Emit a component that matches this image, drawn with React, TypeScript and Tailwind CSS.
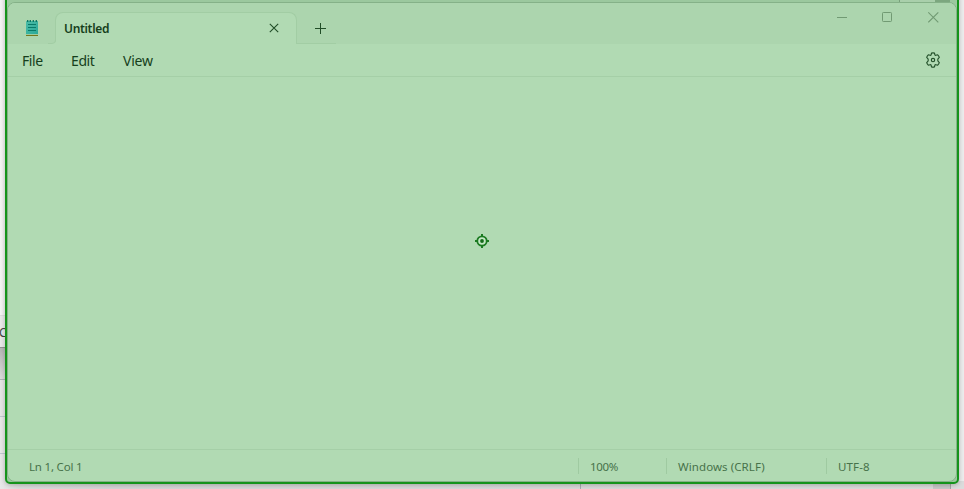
import React from "react";

function NotepadIcon() {
  return (
    <svg width="14" height="18" viewBox="0 0 14 18" className="block">
      <defs>
        <linearGradient id="paper" x1="0" y1="0" x2="1" y2="1">
          <stop offset="0" stopColor="#4dbda8" />
          <stop offset="1" stopColor="#2aa898" />
        </linearGradient>
      </defs>
      <rect x="1" y="2" width="12" height="13" rx="0.6" fill="url(#paper)" />
      <path d="M2.7 1v2M5.3 1v2M8.3 1v2M11.3 1v2" stroke="#08735f" strokeWidth="1.3" />
      <path d="M3 5.5h8M3 8.5h8M3 11.5h8" stroke="#087a68" strokeWidth="1" />
      <path d="M1 15.5h12" stroke="#9dcda0" strokeWidth="1" />
      <path d="M1 16.5h12" stroke="#73761b" strokeWidth="1" />
    </svg>
  );
}

function GearIcon() {
  return (
    <svg width="16" height="16" viewBox="0 0 16 16" fill="none" stroke="#23502a" strokeWidth="1.15" strokeLinejoin="round" className="block">
      <path d="M6.5 1.1Q8 .7 9.5 1.1L9.9 2.9Q10.2 3.4 10.9 3.3L12.7 2.8Q13.8 3.9 14.3 5.4L13 6.8Q12.5 8 13 9.2L14.3 10.6Q13.8 12.1 12.7 13.2L10.9 12.7Q10.2 12.6 9.9 13.1L9.5 14.9Q8 15.3 6.5 14.9L6.1 13.1Q5.8 12.6 5.1 12.7L3.3 13.2Q2.2 12.1 1.7 10.6L3 9.2Q3.5 8 3 6.8L1.7 5.4Q2.2 3.9 3.3 2.8L5.1 3.3Q5.8 3.4 6.1 2.9Z" />
      <circle cx="8" cy="8" r="1.7" />
    </svg>
  );
}

function TargetIcon() {
  return (
    <svg width="14" height="14" viewBox="0 0 14 14" className="block">
      <circle cx="7" cy="7" r="4.7" fill="#c4e8c5" stroke="#1a7a20" strokeWidth="1.8" />
      <circle cx="7" cy="7" r="1.9" fill="#156b1a" />
      <path d="M7 0v2.5M7 11.5V14M0 7h2.5M11.5 7H14" stroke="#1a7a20" strokeWidth="2" />
    </svg>
  );
}

function Backdrop() {
  return (
    <div className="flex h-full w-full bg-[#ededed]">
      <div className="flex w-5 flex-col overflow-hidden">
        <div className="h-[316px] border-b border-[#dedede] bg-linear-to-r from-[#f5f5f5] to-[#e5e5e5]" />
        <div className="h-[32px] border-b border-[#929292] bg-[#e9e9e9] pt-[9px] text-[12px] leading-4 text-[#444]">
          <span className="-ml-px">C</span>
        </div>
        <div className="h-8 border-b border-[#b0b1b8] bg-linear-to-b from-[#b6b6b6] to-[#dcdcdc]" />
        <div className="h-[37px] border-b border-[#c1c8d0] bg-[#e6e6e6]" />
        <div className="h-[37px] border-b border-[#c1c8d0] bg-[#e8e8e8]" />
        <div className="grow bg-linear-to-r from-[#e8e8e8] to-[#dcdcdc]" />
      </div>
      <div className="flex grow flex-col justify-end">
        <div className="flex h-2 bg-linear-to-r from-[#dcdcdc] via-[#d6d4d6] via-10% to-[#dcdcdc]">
          <div className="w-[561px] border-r border-[#a8a9b0]" />
          <div className="grow" />
          <div className="mr-[13px] h-full w-[18px] border-r border-[#a5a5a5] bg-[#c8c8c8]" />
        </div>
      </div>
    </div>
  );
}

function TitleBar() {
  return (
    <div className="flex h-[41px] shrink-0 bg-[#acd5ae]">
      <div className="flex w-[47px] justify-center pt-[16px] pl-[1px]">
        <NotepadIcon />
      </div>
      <div className="relative mt-[9px] flex h-8 w-[242px] items-start justify-between rounded-t-[8px] border border-b-0 border-[#a2cda4] bg-[#b1dab3] pl-2">
        <svg width="8" height="8" viewBox="0 0 8 8" className="absolute bottom-0 -left-[8px]">
          <path d="M8 4Q8 7.5 4 7.5H0V8H8Z" fill="#b1dab3" />
          <path d="M7.5 0V4Q7.5 7.5 4 7.5H0" fill="none" stroke="#a2cda4" />
        </svg>
        <span className="mt-2 text-[12px] leading-4 font-semibold tracking-[-0.32px] text-[#163f1c]">Untitled</span>
        <svg width="10" height="10" viewBox="0 0 10 10" className="mt-[10px] mr-[17px]">
          <path d="M.8.8l8.4 8.4M9.2.8L.8 9.2" stroke="#214d27" strokeWidth="1.1" />
        </svg>
      </div>
      <div className="flex h-[41px] w-[39px] border-b border-[#a2cda4] pt-[20px] pl-[18px]">
        <svg width="11" height="11" viewBox="0 0 11 11">
          <path d="M0 5.5h11M5.5 0v11" stroke="#214d27" />
        </svg>
      </div>
      <div className="ml-auto flex gap-[35px] pt-[8px] pr-[17px]">
        <svg width="11" height="12" viewBox="0 0 11 12">
          <path d="M1 6.5h10" stroke="#719a73" />
        </svg>
        <svg width="11" height="12" viewBox="0 0 11 12">
          <rect x="0.5" y="1.5" width="9" height="9" rx="0.8" fill="none" stroke="#719a73" />
        </svg>
        <svg width="11" height="12" viewBox="0 0 11 12">
          <path d="M.3 1.3l10 10M10.3 1.3l-10 10" stroke="#719a73" strokeWidth="1.1" />
        </svg>
      </div>
    </div>
  );
}

function MenuBar() {
  return (
    <div className="flex h-[33px] shrink-0 items-start border-b border-[#a5cfa7] pt-[7px] pr-[15px] pl-[14px] text-[14px] leading-5 text-[#163f1c]">
      <span className="w-[49px] tracking-[-0.4px]">File</span>
      <span className="w-[52px] tracking-[-0.4px]">Edit</span>
      <span className="tracking-[-0.2px]">View</span>
      <span className="mt-[1px] ml-auto">
        <GearIcon />
      </span>
    </div>
  );
}

function StatusBar() {
  return (
    <div className="flex h-8 shrink-0 items-start border-t border-[#a5cfa7] text-[11.5px] leading-4 tracking-[-0.2px] text-[#47724a]">
      <span className="w-[570px] pt-[9px] pl-[21px]">Ln 1, Col 1</span>
      <div className="mt-2 flex h-4 w-[88px] border-l border-[#9fcaa1] pt-px pl-[11px] tracking-[-0.3px]">100%</div>
      <div className="mt-2 flex h-4 w-[160px] border-l border-[#9fcaa1] pt-px pl-[11px] tracking-[0.08px]">Windows (CRLF)</div>
      <div className="mt-2 flex h-4 border-l border-[#9fcaa1] pt-px pl-[11px] tracking-[0.15px]">UTF-8</div>
    </div>
  );
}

export default function App() {
  return (
    <div className="relative h-[489px] w-[964px] overflow-hidden font-['Noto_Sans','Open_Sans',sans-serif]">
      <Backdrop />
      <div className="absolute -top-2 left-[5px] h-[492px] w-[954px] overflow-hidden rounded-[5px] border-2 border-[#15931b] bg-[#9bc89e] shadow-[0_1px_5px_rgba(0,0,0,0.25)]">
        <div className="mt-[6px] flex h-[2px] justify-end">
          <div className="mr-[7px] flex w-[51px] justify-between border-l border-[#789f7b] bg-[#a9cfab]">
            <span />
            <span className="w-[15px] bg-[#7ca77f]" />
          </div>
        </div>
        <div className="flex h-[480px] w-[950px] flex-col overflow-hidden rounded-[8px] border border-[#85b188] bg-[#b1dab3]">
          <TitleBar />
          <MenuBar />
          <div className="flex grow items-start justify-center pt-[157px] pr-[1px]">
            <TargetIcon />
          </div>
          <StatusBar />
        </div>
      </div>
    </div>
  );
}
